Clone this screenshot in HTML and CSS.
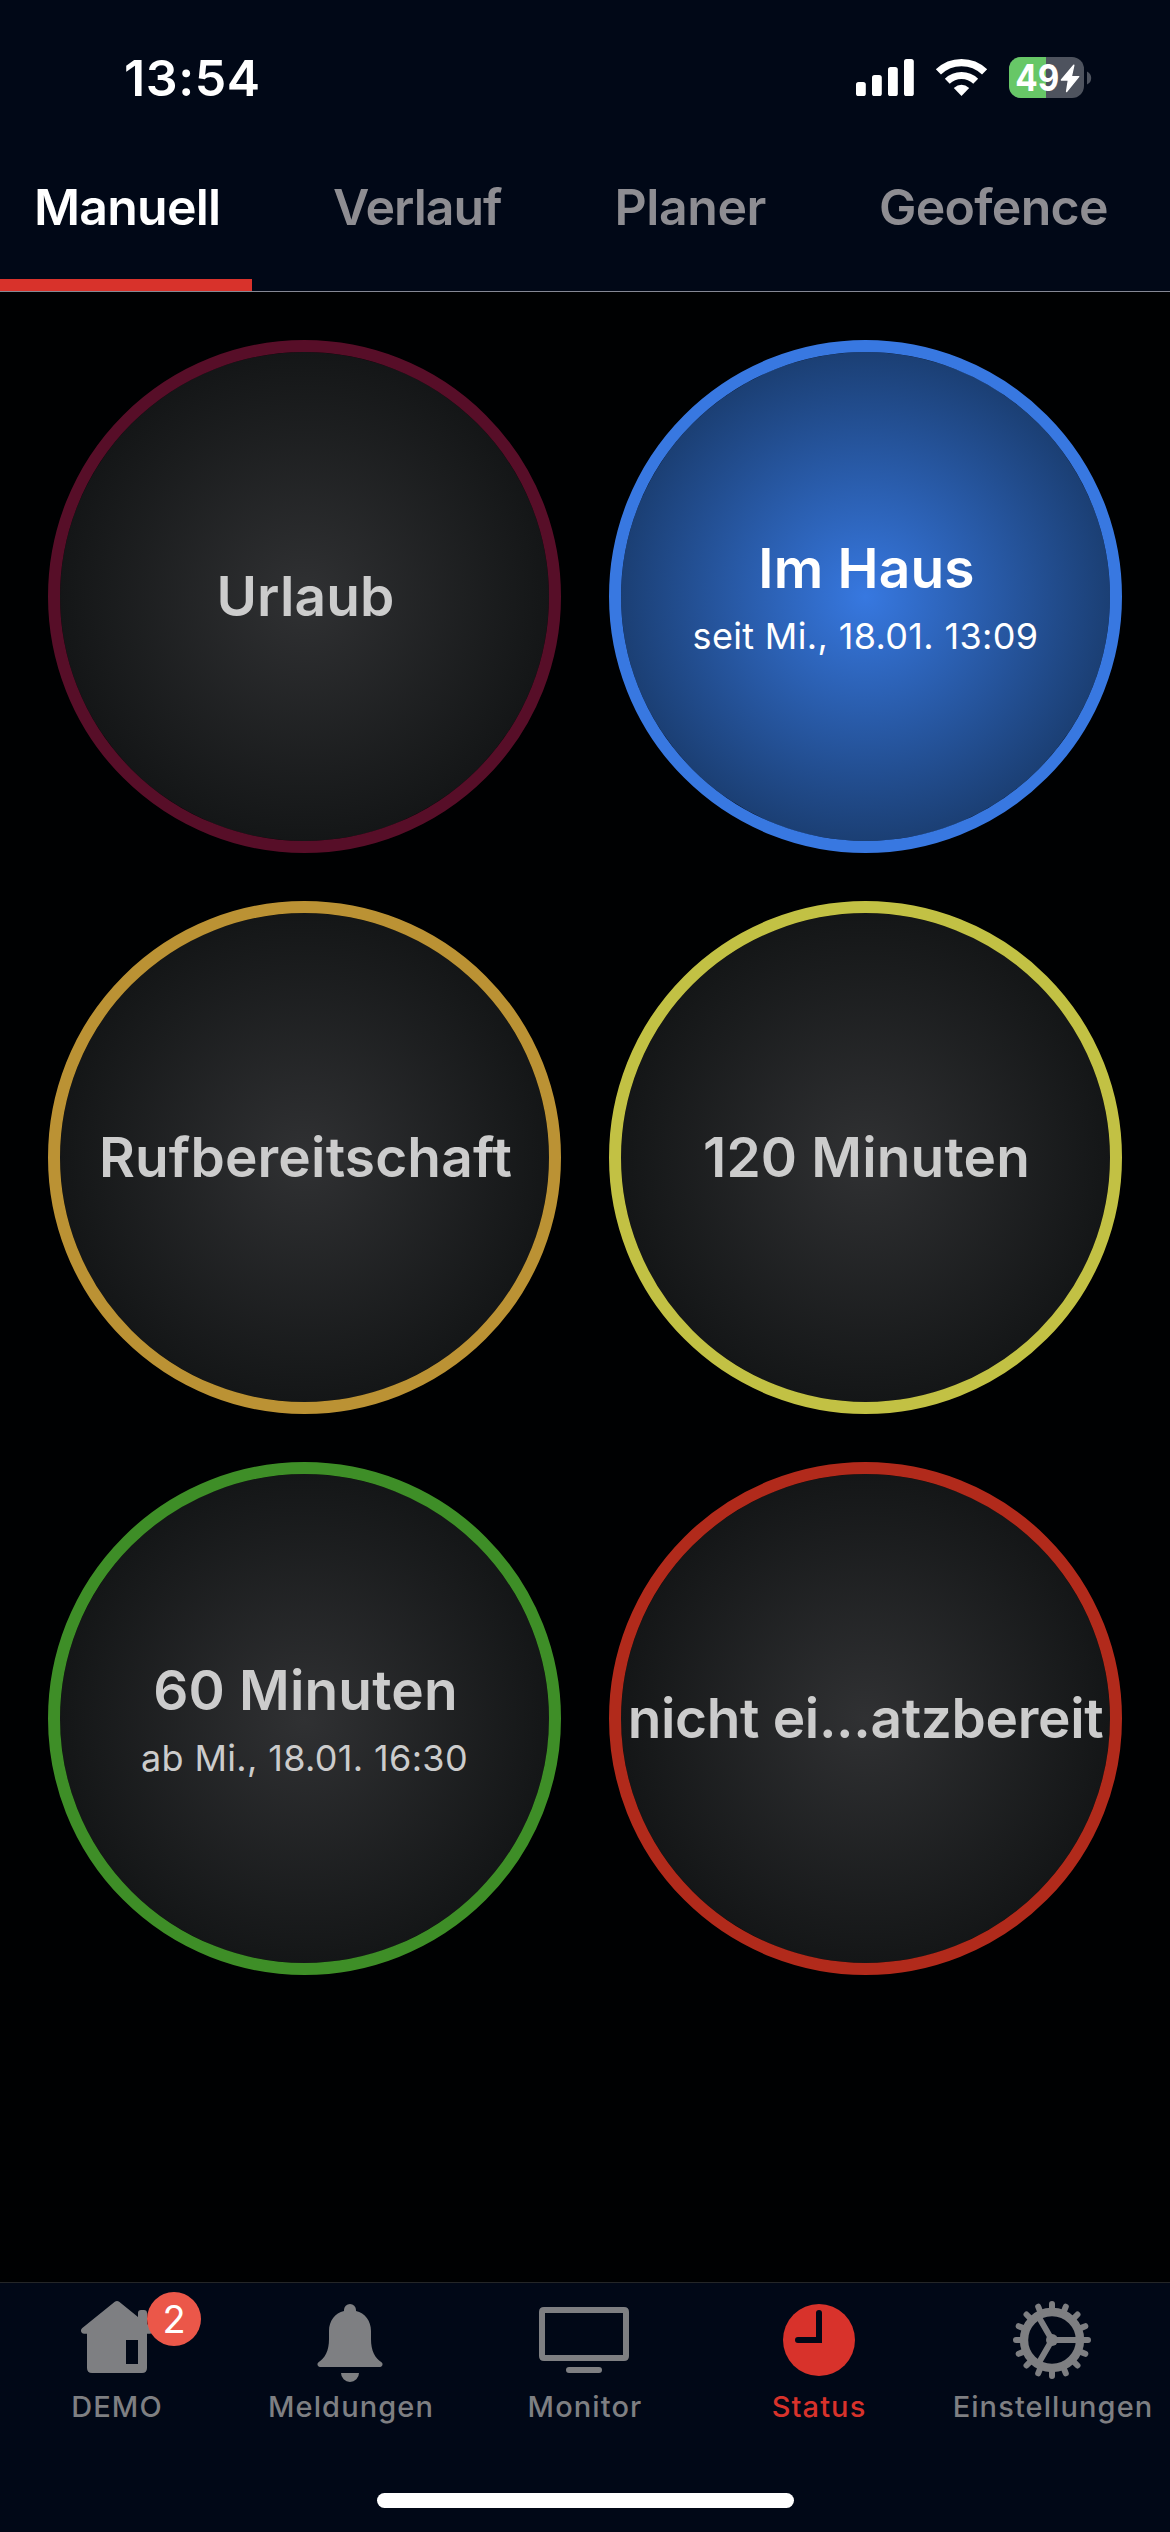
FILE: index.html
```
<!DOCTYPE html>
<html lang="de">
<head>
<meta charset="utf-8">
<title>Status</title>
<link rel="stylesheet" href="styles.css">
</head>
<body>
<div class="screen">
  <header class="header">
    <div class="statusbar">
      <time class="clock">13:54</time>
      <svg class="indicators" viewBox="856 57 236 41" aria-hidden="true">
        <g fill="#fff">
          <rect x="856" y="82" width="9.8" height="14" rx="2.6"/>
          <rect x="872" y="75" width="9.8" height="21" rx="2.6"/>
          <rect x="888" y="67" width="9.8" height="29" rx="2.6"/>
          <rect x="904" y="59" width="9.8" height="37" rx="2.6"/>
        </g>
        <g fill="none" stroke="#fff">
          <path stroke-width="7.4" d="M938.4 71.9A33.3 33.3 0 0 1 984.6 71.9"/>
          <path stroke-width="7" d="M947.3 81.2A20.5 20.5 0 0 1 975.7 81.2"/>
        </g>
        <path fill="#fff" d="M961.5 96L953.8 88Q961.5 81.6 969.2 88Z"/>
        <clipPath id="cell"><rect x="1009" y="57" width="75" height="41" rx="12"/></clipPath>
        <g clip-path="url(#cell)">
          <rect x="1009" y="57" width="75" height="41" fill="#4e535e"/>
          <rect x="1009" y="57" width="37" height="41" fill="#67c767"/>
        </g>
        <path fill="#4e535e" d="M1087 71.5Q1091.2 73.5 1091.2 78T1087 84.5Z"/>
        <text class="level" x="1015.3" y="91.2" textLength="44" lengthAdjust="spacingAndGlyphs">49</text>
        <path fill="#fff" stroke="#fff" stroke-width="1.4" stroke-linejoin="round" d="M1073.8 65.3L1061.4 80H1068.4L1066.6 91.6L1078.7 76.6H1071.3Z"/>
      </svg>
    </div>
    <nav class="tabs">
      <a class="tab active">Manuell</a>
      <a class="tab verlauf">Verlauf</a>
      <a class="tab planer">Planer</a>
      <a class="tab geofence">Geofence</a>
    </nav>
  </header>

  <main class="grid">
    <button class="state wine"><span class="name">Urlaub</span></button>
    <button class="state blue"><span class="name">Im Haus</span><span class="when">seit Mi., 18.01. 13:09</span></button>
    <button class="state amber"><span class="name">Rufbereitschaft</span></button>
    <button class="state yellow"><span class="name">120 Minuten</span></button>
    <button class="state green"><span class="name">60 Minuten</span><span class="when">ab Mi., 18.01. 16:30</span></button>
    <button class="state red"><span class="name long">nicht ei...atzbereit</span></button>
  </main>

  <footer class="footer">
    <nav class="tabbar">
      <a class="item">
        <svg class="icon" viewBox="0 0 100 90"><path fill="currentColor" fill-rule="evenodd" d="M47.8 6.8Q50 5.2 52.2 6.8L71 22V18Q71 15 74 15H77Q80 15 80 18V29L85.3 33.2Q87 35 86 37Q85 38.7 83 38.7H80V73Q80 78 75 78H25Q20 78 20 73V38.7H17Q15 38.7 14.2 37Q13.3 35 15 33.2ZM59 45V69H71V45Z"/></svg>
        <span class="label">DEMO</span>
        <span class="badge">2</span>
      </a>
      <a class="item">
        <svg class="icon" viewBox="0 0 100 90"><path fill="currentColor" d="M43 16V15A6 6 0 0 1 55 15V16C64 18 70 26 70 36V44C70 56 74 63 80.5 67.3A2.6 2.6 0 0 1 79.3 72H18.7A2.6 2.6 0 0 1 17.5 67.3C24 63 28 56 28 44V36C28 26 34 18 43 16ZM40 78H58A9 9 0 0 1 40 78Z"/></svg>
        <span class="label">Meldungen</span>
      </a>
      <a class="item">
        <svg class="icon" viewBox="0 0 100 90"><path fill="currentColor" fill-rule="evenodd" d="M9 12H89Q94 12 94 17V61Q94 66 89 66H9Q4 66 4 61V17Q4 12 9 12ZM10 18V60H88V18Z"/><rect x="31" y="72" width="36" height="6" rx="3" fill="currentColor"/></svg>
        <span class="label">Monitor</span>
      </a>
      <a class="item current">
        <svg class="icon" viewBox="0 0 100 90"><circle cx="50" cy="45" r="36" fill="currentColor"/><path fill="#010817" d="M47 42V18A3 3 0 0 1 53 18V48H29A3 3 0 0 1 29 42Z"/></svg>
        <span class="label">Status</span>
      </a>
      <a class="item">
        <svg class="icon" viewBox="0 0 100 90"><g transform="translate(49 45)" fill="none" stroke="currentColor" stroke-width="6"><circle r="28" stroke-width="8.4"/><path d="M0 0H26M0 0L-13 -22.5M0 0L-13 22.5"/><path stroke-linecap="round" d="M31 0H36M28.6 11.9L33.3 13.8M21.9 21.9L25.5 25.5M11.9 28.6L13.8 33.3M0 31V36M-11.9 28.6L-13.8 33.3M-21.9 21.9L-25.5 25.5M-28.6 11.9L-33.3 13.8M-31 0H-36M-28.6 -11.9L-33.3 -13.8M-21.9 -21.9L-25.5 -25.5M-11.9 -28.6L-13.8 -33.3M0 -31V-36M11.9 -28.6L13.8 -33.3M21.9 -21.9L25.5 -25.5M28.6 -11.9L33.3 -13.8"/><circle r="6" fill="currentColor" stroke="none"/></g></svg>
        <span class="label">Einstellungen</span>
      </a>
    </nav>
    <div class="home"></div>
  </footer>
</div>
</body>
</html>
```
FILE: styles.css
```
* { box-sizing: border-box; }
body { margin: 0; background: #000102; font-family: Inter, "Liberation Sans", sans-serif; }
.screen { display: flex; flex-direction: column; width: 1170px; height: 2532px; overflow: hidden; }

.header { height: 292px; background: #010817; border-bottom: 1px solid #858894; }
.statusbar { display: flex; justify-content: space-between; height: 124px; padding: 57px 78px 0 124px; }
.clock { color: #fff; font-size: 50px; font-weight: 600; line-height: 42px; letter-spacing: .6px; }
.indicators { display: block; width: 236px; height: 41px; }
.level { fill: #fff; font-size: 37px; font-weight: 700; }

.tabs { display: flex; height: 167px; }
.tab {
  height: 167px; padding: 0 32px 12px 34px;
  color: #8e8d92; font-size: 50px; font-weight: 600; line-height: 166px; letter-spacing: -.78px; white-space: nowrap;
}
.tab.active { width: 252px; color: #fff; border-bottom: 12px solid #d8322b; padding-bottom: 0; }
.tab.verlauf { margin-left: 47px; letter-spacing: -1px; }
.tab.planer { margin-left: 47px; letter-spacing: -.45px; }
.tab.geofence { margin-left: 47px; letter-spacing: -.7px; }

.grid { flex: 1; display: grid; grid-template-columns: 513px 513px; grid-auto-rows: 513px; gap: 48px; padding: 48px; }
.state {
  display: flex; flex-direction: column; align-items: center; justify-content: center;
  padding: 0 0 1px; border: 12px solid; border-radius: 50%;
  background: radial-gradient(circle closest-side, #303133, #141617) padding-box;
  font-family: inherit; white-space: nowrap;
}
.name { padding-left: 2px; color: #ccc; font-size: 55px; font-weight: 600; line-height: 81px; letter-spacing: .17px; }
.name.long { padding-left: 0; letter-spacing: -.34px; }
.when { color: #ccc; font-size: 36px; line-height: 55px; letter-spacing: .34px; }
.wine { border-color: #570e28; }
.blue { border-color: #3878e1; background-image: radial-gradient(circle closest-side, #3778e0, #1b3f74); }
.blue .name, .blue .when { color: #fff; }
.amber { border-color: #bb9234; }
.yellow { border-color: #c2c144; }
.green { border-color: #3e8e27; }
.red { border-color: #b12a1b; }

.footer { height: 250px; background: #010817; border-top: 1px solid #242628; }
.tabbar { display: grid; grid-template-columns: repeat(5, 234px); padding-top: 12px; }
.item { position: relative; display: flex; flex-direction: column; align-items: center; color: #7e7f82; }
.icon { display: block; width: 100px; height: 90px; }
.label { font-size: 29px; font-weight: 460; line-height: 44px; letter-spacing: 1.1px; }
.current { color: #d8322b; }
.badge {
  position: absolute; left: 147px; top: -3px; width: 54px; height: 54px; border-radius: 50%;
  background: #eb5749; color: #fff; font-size: 38px; line-height: 54px; text-align: center;
}
.home { width: 417px; height: 15px; margin: 64px auto 0; border-radius: 8px; background: #fff; }
```
